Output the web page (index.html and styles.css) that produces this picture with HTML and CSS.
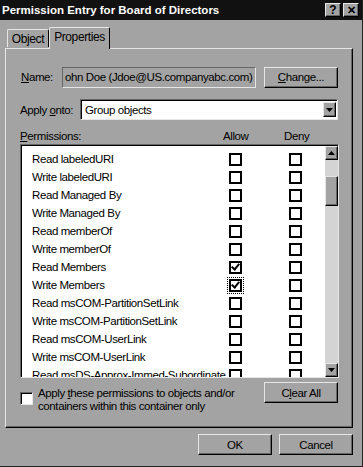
FILE: index.html
```html
<!DOCTYPE html>
<html lang="en">
<head>
  <meta charset="UTF-8">
  <title>Permission Entry for Board of Directors</title>
  <link rel="stylesheet" href="styles.css">
</head>
<body>
  <div class="window">
    <div class="titlebar">
      <span class="title">Permission Entry for Board of Directors</span>
      <div class="title-btns">
        <span class="tbtn">?</span>
        <span class="tbtn close">&#x2715;</span>
      </div>
    </div>

    <div class="tabs">
      <span class="tab">Object</span>
      <span class="tab active">Properties</span>
    </div>

    <div class="panel">
      <div class="row name-row">
        <label class="lbl name-lbl"><u>N</u>ame:</label>
        <div class="field">ohn Doe (Jdoe@US.companyabc.com)</div>
        <button class="btn"><u>C</u>hange...</button>
      </div>

      <div class="row apply-row">
        <label class="lbl apply-lbl">Apply <u>o</u>nto:</label>
        <div class="combo">
          <span class="combo-text">Group objects</span>
          <span class="combo-btn">
            <svg width="7" height="4" viewBox="0 0 7 4"><path d="M0 0h7L3.5 4z" fill="#000"/></svg>
          </span>
        </div>
      </div>

      <div class="perm-head">
        <span class="perm-lbl"><u>P</u>ermissions:</span>
        <span class="allow-lbl">Allow</span>
        <span class="deny-lbl">Deny</span>
      </div>

      <div class="list">
        <div class="list-items">
          <div class="item"><span>Read labeledURI</span><i class="cb"></i><i class="cb"></i></div>
          <div class="item"><span>Write labeledURI</span><i class="cb"></i><i class="cb"></i></div>
          <div class="item"><span>Read Managed By</span><i class="cb"></i><i class="cb"></i></div>
          <div class="item"><span>Write Managed By</span><i class="cb"></i><i class="cb"></i></div>
          <div class="item"><span>Read memberOf</span><i class="cb"></i><i class="cb"></i></div>
          <div class="item"><span>Write memberOf</span><i class="cb"></i><i class="cb"></i></div>
          <div class="item"><span>Read Members</span><i class="cb checked"></i><i class="cb"></i></div>
          <div class="item"><span>Write Members</span><i class="cb checked focus"></i><i class="cb"></i></div>
          <div class="item"><span>Read msCOM-PartitionSetLink</span><i class="cb"></i><i class="cb"></i></div>
          <div class="item"><span>Write msCOM-PartitionSetLink</span><i class="cb"></i><i class="cb"></i></div>
          <div class="item"><span>Read msCOM-UserLink</span><i class="cb"></i><i class="cb"></i></div>
          <div class="item"><span>Write msCOM-UserLink</span><i class="cb"></i><i class="cb"></i></div>
          <div class="item"><span>Read msDS-Approx-Immed-Subordinate</span><i class="cb"></i><i class="cb"></i></div>
        </div>
        <div class="scrollbar">
          <span class="sbtn">
            <svg width="7" height="4" viewBox="0 0 7 4"><path d="M3.5 0L7 4H0z" fill="#000"/></svg>
          </span>
          <div class="track">
            <span class="thumb"></span>
          </div>
          <span class="sbtn">
            <svg width="7" height="4" viewBox="0 0 7 4"><path d="M0 0h7L3.5 4z" fill="#000"/></svg>
          </span>
        </div>
      </div>

      <div class="row bottom-row">
        <i class="cb3d"></i>
        <span class="apply-text">Apply <u>t</u>hese permissions to objects and/or<br>containers within this container only</span>
        <button class="btn">C<u>l</u>ear All</button>
      </div>
    </div>

    <div class="footer">
      <button class="btn ok">OK</button>
      <button class="btn">Cancel</button>
    </div>
  </div>
</body>
</html>
```

FILE: styles.css
```css
body {
  margin: 0;
  background: #a3a3a3;
  font-family: 'Liberation Sans', Arial, sans-serif;
  font-size: 11.5px;
  letter-spacing: -0.4px;
  color: #000;
}

.window {
  width: 363px;
  height: 467px;
  box-sizing: border-box;
  border-right: 1px solid #222;
  border-bottom: 1px solid #222;
  background: #a3a3a3;
}

.titlebar {
  height: 20px;
  background: #111;
  color: #fff;
  display: flex;
  align-items: center;
  justify-content: space-between;
  padding: 0 3px 0 2px;
}

.title {
  font-weight: bold;
  font-size: 11.5px;
  letter-spacing: 0;
}

.title-btns {
  display: flex;
  gap: 2px;
}

.tbtn {
  width: 16px;
  height: 14px;
  box-sizing: border-box;
  background: #a3a3a3;
  color: #000;
  font-weight: bold;
  font-size: 12px;
  line-height: 12px;
  text-align: center;
  letter-spacing: 0;
  border-top: 1px solid #e6e6e6;
  border-left: 1px solid #e6e6e6;
  border-right: 1px solid #000;
  border-bottom: 1px solid #000;
  box-shadow: inset -1px -1px #666;
}

.tbtn.close {
  font-size: 11px;
}

.tabs {
  display: flex;
  align-items: flex-end;
  height: 28px;
  padding-left: 7px;
  position: relative;
  z-index: 1;
}

.tab {
  height: 18px;
  width: 42px;
  text-align: center;
  line-height: 19px;
  font-size: 12px;
  box-sizing: border-box;
  border-top: 1px solid #e6e6e6;
  border-left: 1px solid #e6e6e6;
  border-right: 1px solid #000;
  border-radius: 2px 2px 0 0;
  margin-bottom: 1px;
}

.tab.active {
  height: 22px;
  width: 61px;
  line-height: 18px;
  margin-bottom: -1px;
  background: #a3a3a3;
}

.panel {
  margin-left: 5px;
  width: 348px;
  height: 380px;
  box-sizing: border-box;
  border-top: 1px solid #e6e6e6;
  border-left: 1px solid #e6e6e6;
  border-right: 1px solid #000;
  border-bottom: 1px solid #000;
  box-shadow: inset -1px -1px #666;
  padding: 17px 0 0 14px;
}

.row {
  display: flex;
  align-items: center;
}

.lbl {
  flex: none;
}

.name-row {
  height: 22px;
}

.name-lbl {
  width: 42px;
  padding-left: 1px;
  box-sizing: border-box;
}

.field {
  width: 194px;
  height: 21px;
  box-sizing: border-box;
  border-top: 1px solid #666;
  border-left: 1px solid #666;
  border-right: 1px solid #e6e6e6;
  border-bottom: 1px solid #e6e6e6;
  padding: 3px 0 0 2px;
  white-space: nowrap;
  overflow: hidden;
}

.btn {
  font-family: inherit;
  font-size: 11.5px;
  letter-spacing: -0.4px;
  color: #000;
  width: 74px;
  height: 21px;
  margin-left: 8px;
  padding: 0;
  background: #a3a3a3;
  border-top: 1px solid #e6e6e6;
  border-left: 1px solid #e6e6e6;
  border-right: 1px solid #000;
  border-bottom: 1px solid #000;
  box-shadow: inset -1px -1px #666;
}

.apply-row {
  margin-top: 11px;
  height: 21px;
}

.apply-lbl {
  width: 60px;
  white-space: nowrap;
}

.combo {
  width: 258px;
  height: 21px;
  box-sizing: border-box;
  background: #fff;
  border-top: 1px solid #666;
  border-left: 1px solid #666;
  border-right: 1px solid #e6e6e6;
  border-bottom: 1px solid #e6e6e6;
  box-shadow: inset 1px 1px #000;
  display: flex;
  align-items: center;
  justify-content: space-between;
  padding: 0 1px 0 4px;
}

.combo-btn, .sbtn {
  width: 13px;
  height: 15px;
  box-sizing: border-box;
  background: #a3a3a3;
  border-top: 1px solid #e6e6e6;
  border-left: 1px solid #e6e6e6;
  border-right: 1px solid #000;
  border-bottom: 1px solid #000;
  box-shadow: inset -1px -1px #666;
  display: flex;
  align-items: center;
  justify-content: center;
}

.perm-head {
  display: flex;
  margin-top: 9px;
  height: 14px;
  line-height: 14px;
}

.perm-lbl {
  width: 203px;
}

.allow-lbl {
  width: 61px;
}

.list {
  margin-top: 1px;
  width: 319px;
  height: 234px;
  box-sizing: border-box;
  background: #fff;
  border-top: 1px solid #666;
  border-left: 1px solid #666;
  border-right: 1px solid #e6e6e6;
  border-bottom: 1px solid #e6e6e6;
  box-shadow: inset 1px 1px #000;
  display: flex;
  overflow: hidden;
}

.list-items {
  flex: 1;
  padding-top: 5px;
  overflow: hidden;
}

.item {
  display: flex;
  align-items: center;
  height: 18px;
  padding-left: 11px;
  white-space: nowrap;
}

.item span {
  flex: none;
  width: 197px;
  overflow: hidden;
}

.cb {
  flex: none;
  width: 13px;
  height: 13px;
  box-sizing: border-box;
  border: 2px solid #000;
  background: #fff;
  position: relative;
}

.cb + .cb {
  margin-left: 47px;
}

.cb.checked::after {
  content: "";
  position: absolute;
  left: 2px;
  top: -1px;
  width: 3px;
  height: 6px;
  border-right: 2px solid #000;
  border-bottom: 2px solid #000;
  transform: rotate(40deg);
}

.cb.focus {
  outline: 1px dotted #000;
  outline-offset: 1px;
}

.scrollbar {
  width: 13px;
  flex: none;
  margin-top: 1px;
  display: flex;
  flex-direction: column;
  background: #d4d4d4;
}

.scrollbar .sbtn {
  height: 14px;
}

.track {
  flex: 1;
  padding-top: 16px;
}

.thumb {
  display: block;
  width: 13px;
  height: 30px;
  box-sizing: border-box;
  background: #a3a3a3;
  border-top: 1px solid #e6e6e6;
  border-left: 1px solid #e6e6e6;
  border-right: 1px solid #000;
  border-bottom: 1px solid #000;
  box-shadow: inset -1px -1px #666;
}

.bottom-row {
  margin-top: 4px;
  align-items: flex-start;
}

.cb3d {
  flex: none;
  width: 13px;
  height: 13px;
  margin-top: 10px;
  box-sizing: border-box;
  background: #fff;
  border-top: 1px solid #666;
  border-left: 1px solid #666;
  border-right: 1px solid #e6e6e6;
  border-bottom: 1px solid #e6e6e6;
  box-shadow: inset 1px 1px #000;
}

.apply-text {
  width: 218px;
  margin-left: 5px;
  margin-top: 5px;
  line-height: 13px;
  white-space: nowrap;
}

.bottom-row .btn {
  margin-left: 8px;
}

.footer {
  display: flex;
  justify-content: flex-end;
  padding: 6px 9px 0 0;
}

.footer .btn {
  margin-left: 7px;
}
```
